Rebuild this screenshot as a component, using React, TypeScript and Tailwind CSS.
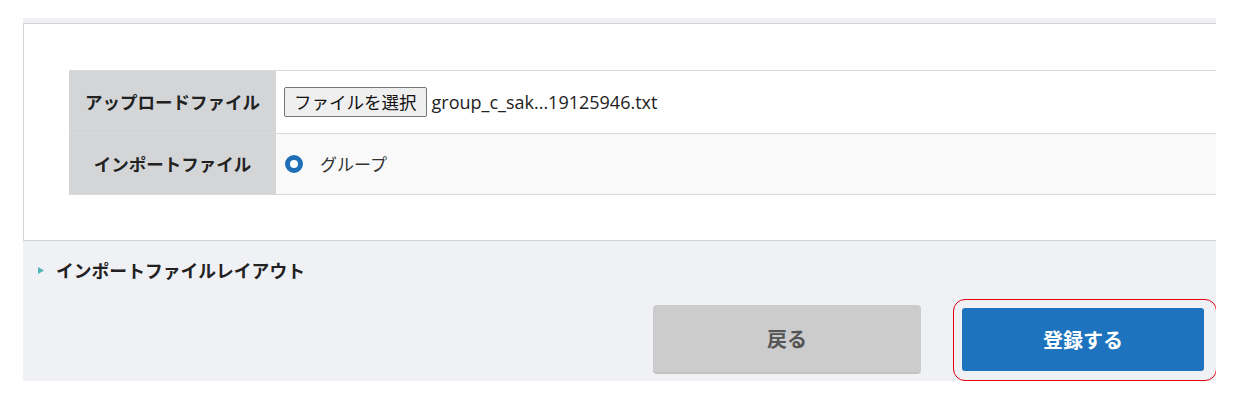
import React from "react";

const jp = { fontFamily: '"Noto Sans CJK JP", "Noto Sans", sans-serif' };

export default function App() {
  return (
    <div className="w-full h-[414px] bg-white overflow-hidden" style={jp}>
      <div className="ml-[23px] mt-[18px] w-[1193px] h-[363px] bg-[#f0f1f5] pt-[5px] overflow-hidden">
        {/* white panel */}
        <div className="bg-white border-t border-b border-l border-[#d3d3d3] pt-[46px] pb-[45px] pl-[45px]">
          <div className="border-t border-[#d9d9d9]">
            <div className="flex h-[63px] border-b border-[#d9d9d9]">
              <div className="w-[207px] shrink-0 bg-[#d4d5d7] flex items-center justify-center text-[17.5px] font-bold text-[#222]">
                アップロードファイル
              </div>
              <div className="flex-1 bg-white flex items-center pl-[8px]">
                <button className="h-[30px] px-[9px] bg-[#efefef] border border-[#767676] rounded-[2px] text-[17.5px] text-[#111] leading-none">
                  ファイルを選択
                </button>
                <span
                  className="ml-[5px] text-[18px] text-[#222]"
                  style={{ fontFamily: '"Open Sans", "Noto Sans", sans-serif' }}
                >
                  group_c_sak...19125946.txt
                </span>
              </div>
            </div>
            <div className="flex h-[61px] border-b border-[#d9d9d9]">
              <div className="w-[207px] shrink-0 bg-[#d4d5d7] flex items-center justify-center text-[17.5px] font-bold text-[#222]">
                インポートファイル
              </div>
              <div className="flex-1 bg-[#f9f9f9] flex items-center pl-[9px]">
                <span className="w-[18px] h-[18px] rounded-full border-[5px] border-[#1f6fb8] bg-white" />
                <span className="ml-[17px] text-[17px] text-[#333]">グループ</span>
              </div>
            </div>
          </div>
        </div>

        {/* layout link */}
        <div className="flex items-center pl-[15px] pt-[17px] h-[41px]">
          <svg width="7" height="7" viewBox="0 0 7 7" className="shrink-0">
            <polygon points="0,0 6,3.5 0,7" fill="#4db5b5" />
          </svg>
          <span className="ml-[11px] text-[17.8px] font-bold text-[#222] leading-[24px]">
            インポートファイルレイアウト
          </span>
        </div>

        {/* buttons */}
        <div className="mt-[23px] flex justify-end items-center pr-[12px] h-[69px]">
          <button className="w-[268px] h-[69px] rounded-[4px] bg-[#cccccc] text-[20px] font-bold text-[#555] border-b-2 border-[#c2c2c2]">
            戻る
          </button>
          <div className="relative ml-[41px]">
            <div className="absolute left-[-9px] right-[-13px] top-[-9px] bottom-[-10px] border border-[#e60012] rounded-[12px] pointer-events-none" />
            <button className="w-[242px] h-[63px] rounded-[3px] bg-[#1d73bd] text-[20px] font-bold text-white">
              登録する
            </button>
          </div>
        </div>
      </div>
    </div>
  );
}
